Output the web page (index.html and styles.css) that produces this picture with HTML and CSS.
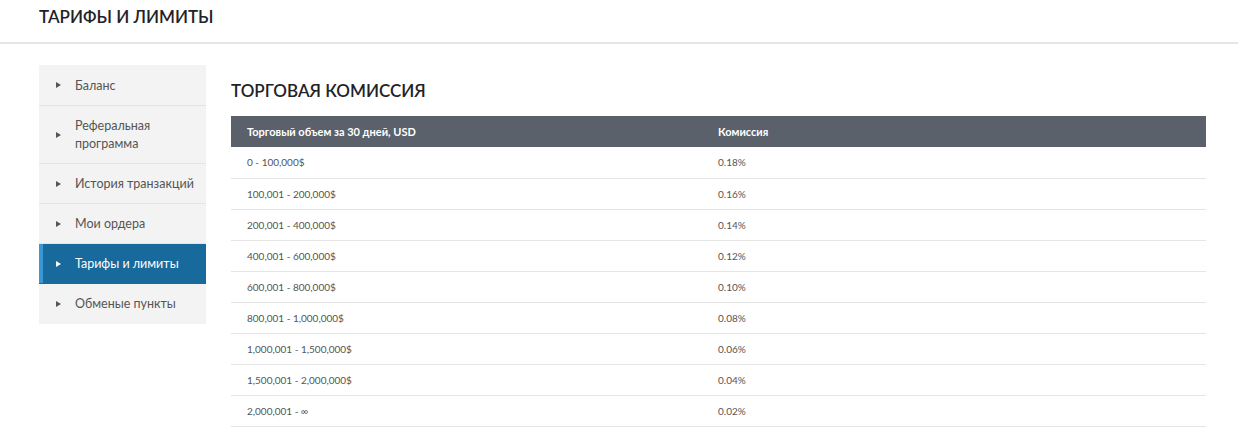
FILE: index.html
```html
<!DOCTYPE html>
<html lang="ru">
<head>
<meta charset="utf-8">
<title>Тарифы и лимиты</title>
<link rel="stylesheet" href="styles.css">
</head>
<body>
<header class="page-header">
  <h1 class="page-title">ТАРИФЫ И ЛИМИТЫ</h1>
</header>
<div class="layout">
  <nav class="sidebar">
    <a class="nav-item" href="#">Баланс</a>
    <a class="nav-item" href="#">Реферальная программа</a>
    <a class="nav-item" href="#">История транзакций</a>
    <a class="nav-item" href="#">Мои ордера</a>
    <a class="nav-item active" href="#">Тарифы и лимиты</a>
    <a class="nav-item" href="#">Обменые пункты</a>
  </nav>
  <main class="content">
    <h2 class="section-title">ТОРГОВАЯ КОМИССИЯ</h2>
    <table class="fees">
      <colgroup><col class="col-volume"><col></colgroup>
      <thead>
        <tr><th>Торговый объем за 30 дней, USD</th><th>Комиссия</th></tr>
      </thead>
      <tbody>
        <tr><td>0 - 100,000$</td><td>0.18%</td></tr>
        <tr><td>100,001 - 200,000$</td><td>0.16%</td></tr>
        <tr><td>200,001 - 400,000$</td><td>0.14%</td></tr>
        <tr><td>400,001 - 600,000$</td><td>0.12%</td></tr>
        <tr><td>600,001 - 800,000$</td><td>0.10%</td></tr>
        <tr><td>800,001 - 1,000,000$</td><td>0.08%</td></tr>
        <tr><td>1,000,001 - 1,500,000$</td><td>0.06%</td></tr>
        <tr><td>1,500,001 - 2,000,000$</td><td>0.04%</td></tr>
        <tr><td>2,000,001 - ∞</td><td>0.02%</td></tr>
      </tbody>
    </table>
  </main>
</div>
</body>
</html>
```
FILE: styles.css
```css
* { box-sizing: border-box; }
html, body { margin: 0; padding: 0; background: #fff; }
body { font-family: Lato, "Open Sans", sans-serif; color: #222; }

.page-header {
  height: 44px;
  padding: 5px 39px 0;
  border-bottom: 2px solid #e6e6e6;
}
.page-title {
  margin: 0;
  font-size: 17px;
  line-height: 24px;
  font-weight: 600;
  color: #1f2327;
}

.layout {
  display: flex;
  gap: 25px;
  padding: 21px 32px 0 39px;
}

.sidebar {
  width: 167px;
  flex: none;
  background: #f3f3f3;
  display: flex;
  flex-direction: column;
  align-self: flex-start;
}
.nav-item {
  position: relative;
  display: block;
  padding: 11px 6px 10px 36px;
  border-bottom: 1px solid #e4e4e4;
  font-size: 12.5px;
  line-height: 18px;
  color: #555;
  text-decoration: none;
}
.nav-item:first-child { padding-top: 12px; }
.nav-item:last-child { border-bottom: none; padding-bottom: 11px; }
.nav-item::before {
  content: "";
  position: absolute;
  left: 17px;
  top: 50%;
  margin-top: -3px;
  border-left: 5px solid #555;
  border-top: 3px solid transparent;
  border-bottom: 3px solid transparent;
}
.nav-item.active {
  background: #18699c;
  color: #fff;
  box-shadow: inset 4px 0 0 #3b98d6;
  border-bottom-color: #18699c;
}
.nav-item.active::before { border-left-color: #fff; }

.content { flex: 1; min-width: 0; }
.section-title {
  margin: 14px 0 14px;
  font-size: 17px;
  line-height: 23px;
  font-weight: 600;
  color: #1f2327;
}

.fees {
  width: 100%;
  border-collapse: collapse;
  table-layout: fixed;
}
.col-volume { width: 471px; }
.fees th {
  background: #5a616b;
  color: #fff;
  font-size: 11px;
  font-weight: 700;
  text-align: left;
  height: 31px;
  padding: 0 16px;
}
.fees td {
  height: 31px;
  padding: 0 16px;
  font-size: 10px;
  color: #555;
  border-bottom: 1px solid #e5e5e5;
}
```
